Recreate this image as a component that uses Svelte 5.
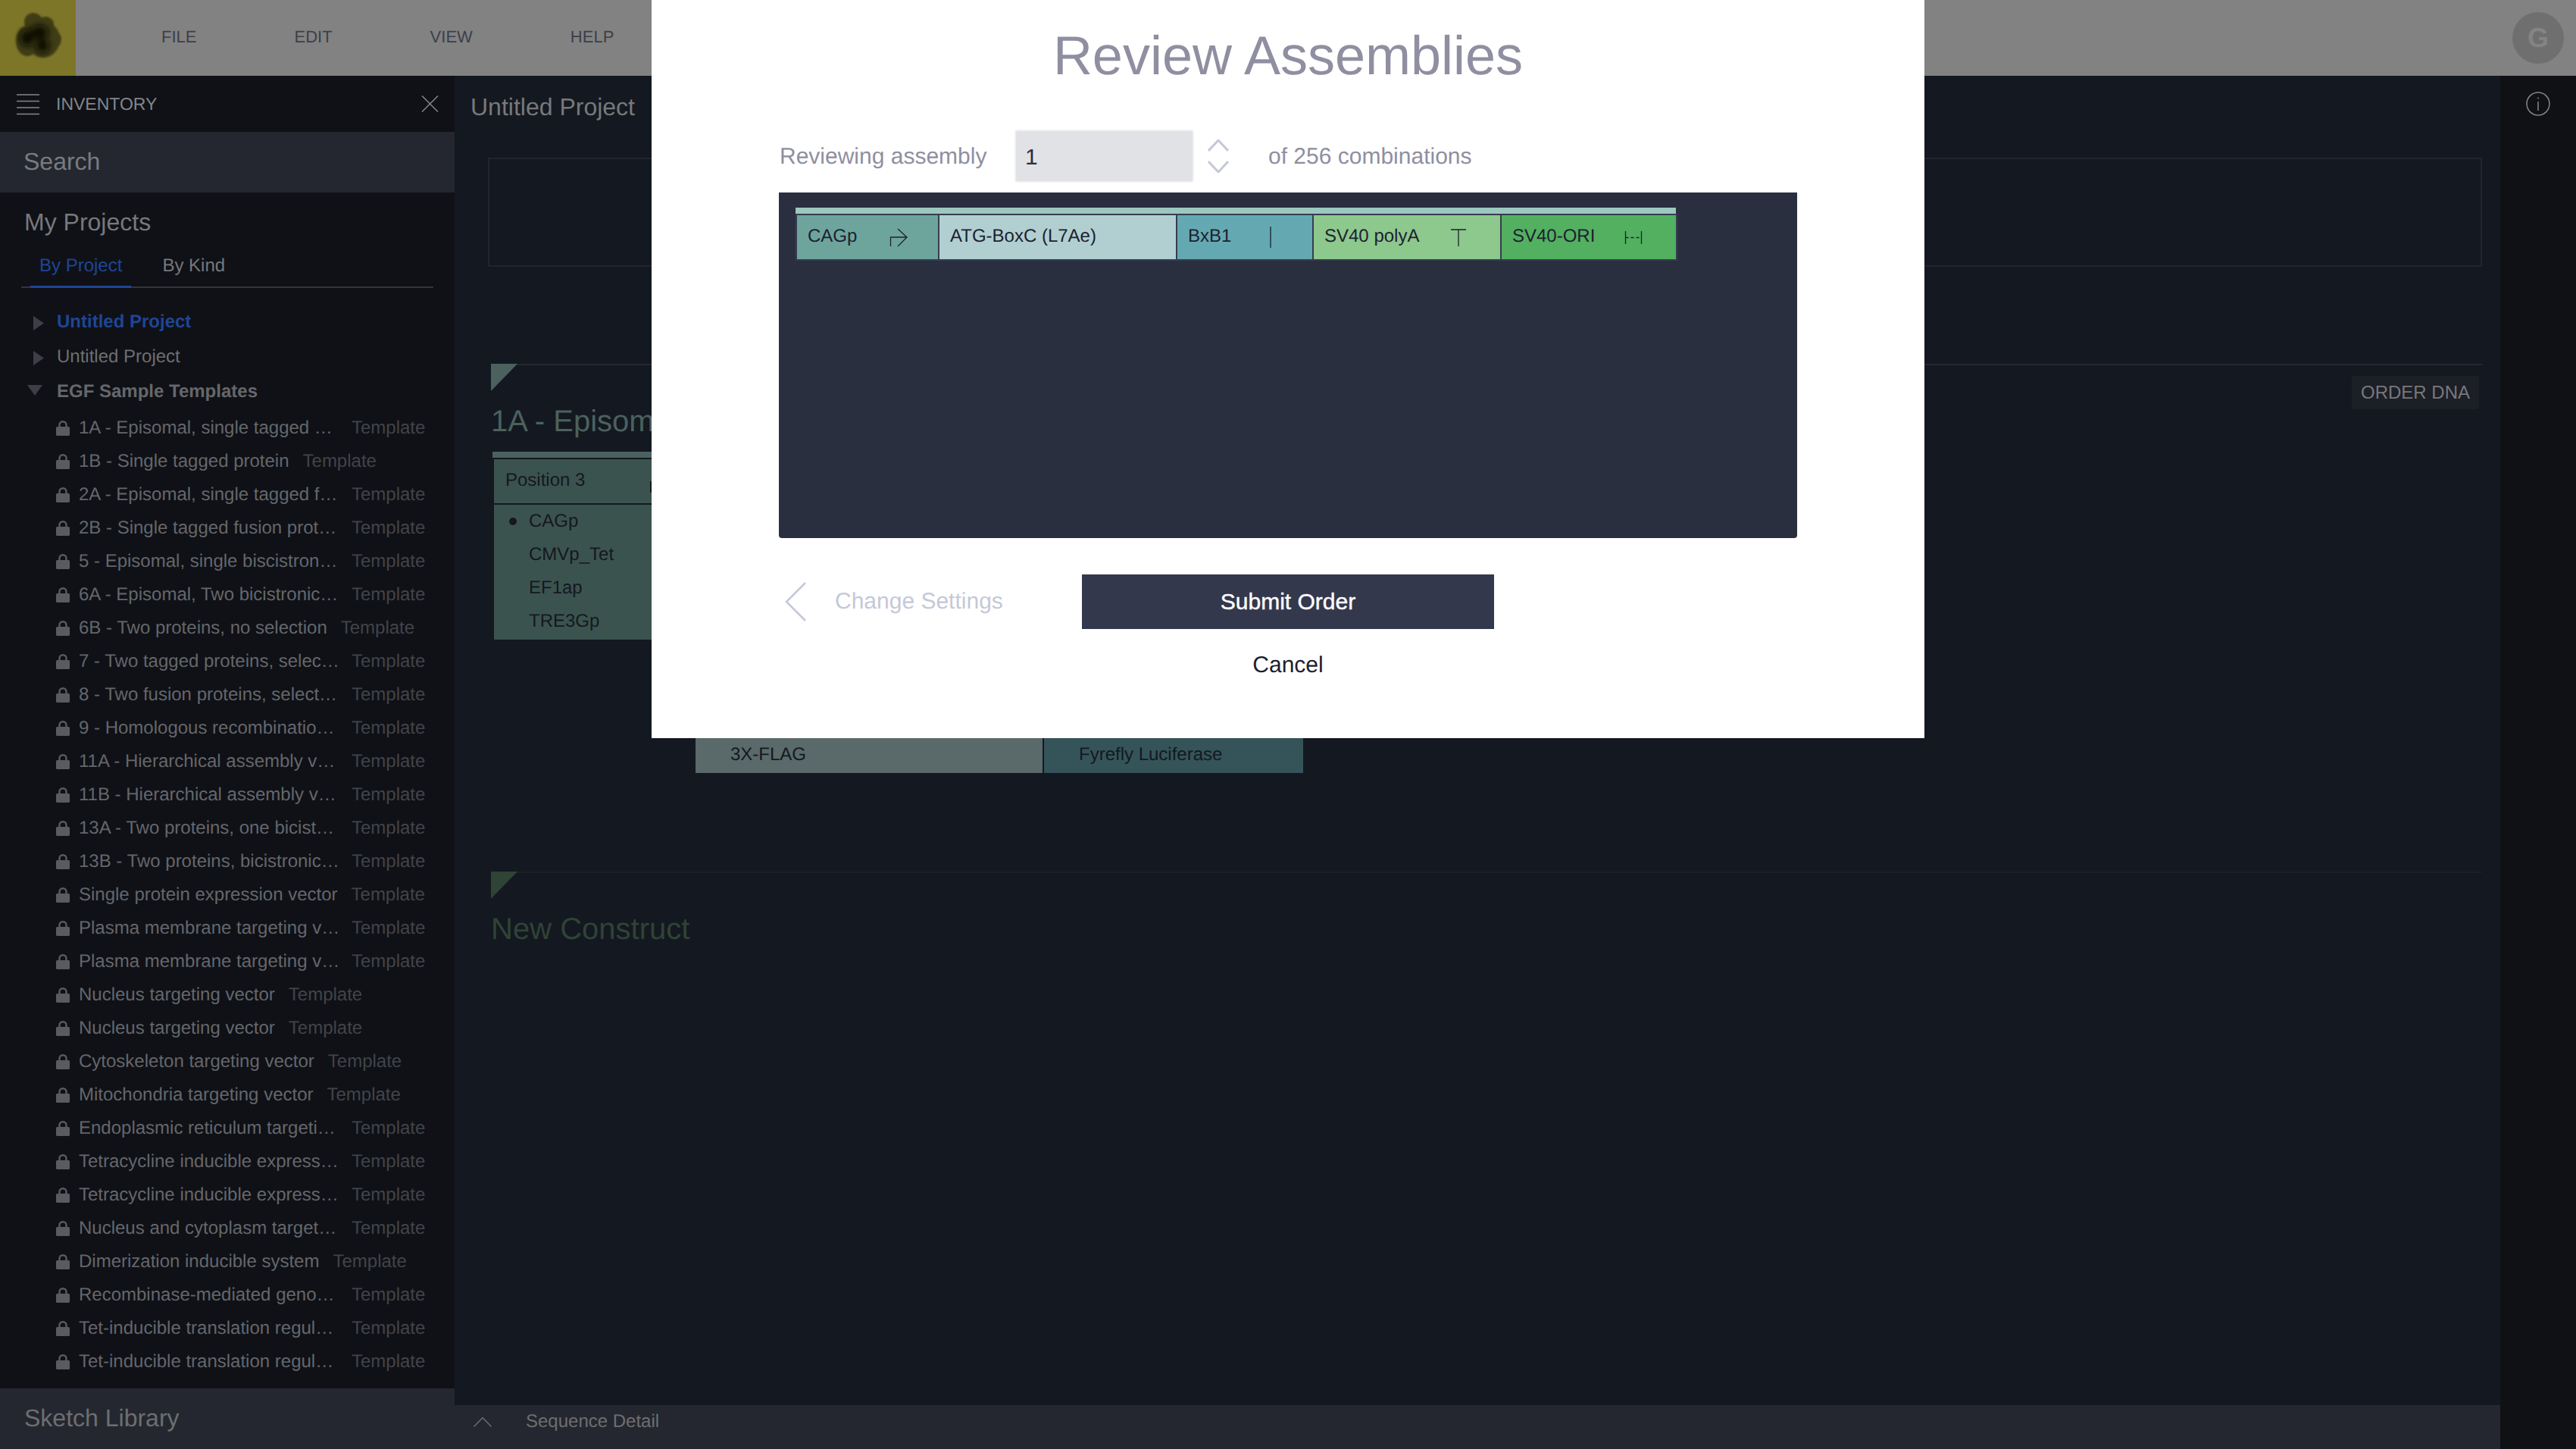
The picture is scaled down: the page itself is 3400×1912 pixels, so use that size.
<script>
  const menu = ['FILE', 'EDIT', 'VIEW', 'HELP'];

  const templates = [
    '1A - Episomal, single tagged …',
    '1B - Single tagged protein',
    '2A - Episomal, single tagged f…',
    '2B - Single tagged fusion prot…',
    '5 - Episomal, single biscistron…',
    '6A - Episomal, Two bicistronic…',
    '6B - Two proteins, no selection',
    '7 - Two tagged proteins, selec…',
    '8 - Two fusion proteins, select…',
    '9 - Homologous recombinatio…',
    '11A - Hierarchical assembly v…',
    '11B - Hierarchical assembly v…',
    '13A - Two proteins, one bicist…',
    '13B - Two proteins, bicistronic…',
    'Single protein expression vector',
    'Plasma membrane targeting v…',
    'Plasma membrane targeting v…',
    'Nucleus targeting vector',
    'Nucleus targeting vector',
    'Cytoskeleton targeting vector',
    'Mitochondria targeting vector',
    'Endoplasmic reticulum targeti…',
    'Tetracycline inducible express…',
    'Tetracycline inducible express…',
    'Nucleus and cytoplasm target…',
    'Dimerization inducible system',
    'Recombinase-mediated geno…',
    'Tet-inducible translation regul…',
    'Tet-inducible translation regul…'
  ];

  const parts = [
    { name: 'CAGp', w: 186, tone: 'cag', icon: 'promoter', at: 120 },
    { name: 'ATG-BoxC (L7Ae)', w: 312, tone: 'atg' },
    { name: 'BxB1', w: 178, tone: 'bxb', icon: 'insulator', at: 109 },
    { name: 'SV40 polyA', w: 246, tone: 'poly', icon: 'terminator', at: 177 },
    { name: 'SV40-ORI', w: 230, tone: 'ori', icon: 'origin', at: 160 }
  ];

  const options = ['CAGp', 'CMVp_Tet', 'EF1ap', 'TRE3Gp'];
</script>

<div class="app">
  <header class="topbar">
    <div class="logo">
      <svg width="100" height="100" viewBox="0 0 100 100">
        <defs>
          <filter id="soft" x="-20%" y="-20%" width="140%" height="140%"><feGaussianBlur stdDeviation="1.2" /></filter>
          <filter id="softer" x="-40%" y="-40%" width="180%" height="180%"><feGaussianBlur stdDeviation="4" /></filter>
        </defs>
        <g filter="url(#soft)" fill="#3f3d13">
          <ellipse cx="44" cy="29" rx="12" ry="12" />
          <ellipse cx="60" cy="32" rx="11" ry="10" />
          <ellipse cx="36" cy="54" rx="15" ry="20" />
          <ellipse cx="57" cy="52" rx="22" ry="24" />
          <ellipse cx="72" cy="52" rx="9" ry="11" />
        </g>
        <g filter="url(#softer)" fill="#0c0c03">
          <ellipse cx="36" cy="50" rx="10" ry="11" />
          <ellipse cx="56" cy="60" rx="9" ry="10" />
          <ellipse cx="52" cy="42" rx="12" ry="9" />
        </g>
      </svg>
    </div>
    <nav class="menu">
      {#each menu as item}
        <span>{item}</span>
      {/each}
    </nav>
    <div class="avatar">G</div>
  </header>

  <div class="body">
    <aside class="sidebar">
      <div class="inv-head">
        <svg class="burger" width="30" height="28" viewBox="0 0 30 28">
          <path d="M0 1H30M0 9.500H30M0 18H30M0 26.500H30" />
        </svg>
        <span>INVENTORY</span>
        <svg class="close" width="23" height="22" viewBox="0 0 23 22">
          <path d="M1 0.500L22 21.500M22 0.500L1 21.500" />
        </svg>
      </div>
      <div class="search">Search</div>
      <h3 class="my-projects">My Projects</h3>
      <div class="tabs">
        <span class="tab active">By Project</span>
        <span class="tab">By Kind</span>
      </div>
      <div class="tree">
        <div class="node selected">
          <svg width="39" height="46" viewBox="0 0 39 46"><polygon points="8,15 22,24.500 8,34" /></svg>
          Untitled Project
        </div>
        <div class="node">
          <svg width="39" height="46" viewBox="0 0 39 46"><polygon points="8,15 22,24.500 8,34" /></svg>
          Untitled Project
        </div>
        <div class="node open">
          <svg width="39" height="46" viewBox="0 0 39 46"><polygon points="0,14 20,14 10,28" /></svg>
          EGF Sample Templates
        </div>
        <ul class="templates">
          {#each templates as name}
            <li>
              <svg width="18" height="20" viewBox="0 0 18 20">
                <path class="shackle" d="M4.500 9V5.500C4.500 3 6.500 1.200 9 1.200S13.500 3 13.500 5.500V9" />
                <rect y="8" width="18" height="12" rx="1.500" />
              </svg>
              <span class="tpl-name" class:cut={name.endsWith('…')}>{name}</span>
              <span class="tpl-kind">Template</span>
            </li>
          {/each}
        </ul>
      </div>
      <div class="sketch">Sketch Library</div>
    </aside>

    <main class="center">
      <div class="canvas">
        <h2 class="project">Untitled Project</h2>
        <div class="box"></div>

        <section class="construct">
          <span class="corner teal"></span>
          <div class="construct-head">
            <h2 class="teal-text">1A - Episomal, single tagged protein</h2>
            <button class="order">ORDER DNA</button>
          </div>
          <div class="bar"></div>
          <div class="position">
            <div class="pos-head">Position 3<i></i></div>
            <ul>
              {#each options as opt, i}
                <li class:picked={i === 0}>{opt}</li>
              {/each}
            </ul>
          </div>
          <div class="lower">
            <div class="flag"><span>3X-FLAG</span></div>
            <div class="luc"><span>Fyrefly Luciferase</span></div>
          </div>
        </section>

        <section class="construct empty">
          <span class="corner green"></span>
          <div class="construct-head">
            <h2 class="green-text">New Construct</h2>
          </div>
        </section>
      </div>
      <div class="detail">
        <svg width="24" height="13" viewBox="0 0 24 13"><path d="M0.500 12.500L12 0.800L23.500 12.500" /></svg>
        <span>Sequence Detail</span>
      </div>
    </main>

    <aside class="rail">
      <svg width="32" height="32" viewBox="0 0 32 32">
        <circle cx="16" cy="16" r="15" />
        <path d="M16 7.500V9.500M16 13V25" />
      </svg>
    </aside>
  </div>

  <div class="modal">
    <h1>Review Assemblies</h1>
    <div class="picker">
      <label for="assembly">Reviewing assembly</label>
      <input id="assembly" type="text" value="1" />
      <svg class="stepper" width="28" height="44" viewBox="0 0 28 44">
        <path d="M1 15L14 1L27 15M1 29L14 43L27 29" />
      </svg>
      <span>of 256 combinations</span>
    </div>
    <div class="panel">
      <div class="panel-bar"></div>
      <div class="parts">
        {#each parts as part}
          <div class="part {part.tone}" style="width: {part.w}px">
            {part.name}
            {#if part.icon}
              <svg style="left: {part.at}px" width="28" height="32" viewBox="0 0 28 32">
                {#if part.icon === 'promoter'}
                  <path d="M3.500 27V15H25M13 4L25 15L13 27" />
                {:else if part.icon === 'insulator'}
                  <path d="M14 1V29" />
                {:else if part.icon === 'terminator'}
                  <path d="M14 27V5M4 5H24" />
                {:else}
                  <path d="M3.500 7V24M24.500 7V24" />
                  <path stroke-dasharray="4 3" d="M3.500 15.500H24.500" />
                {/if}
              </svg>
            {/if}
          </div>
        {/each}
      </div>
    </div>
    <div class="actions">
      <svg width="30" height="52" viewBox="0 0 30 52"><path d="M28 1L3 26L28 51" /></svg>
      <span class="back">Change Settings</span>
      <button class="submit">Submit Order</button>
    </div>
    <div class="cancel">Cancel</div>
  </div>
</div>

<style>
  :global(body) {
    margin: 0;
    background: #141820;
  }
  h1, h2, h3, ul {
    margin: 0;
    padding: 0;
    font-weight: normal;
    list-style: none;
  }
  .app {
    position: relative;
    display: flex;
    flex-direction: column;
    width: 3400px;
    height: 1912px;
    overflow: hidden;
    font-family: "Liberation Sans", Arial, sans-serif;
    font-size: 24px;
    text-rendering: geometricPrecision;
  }

  .topbar {
    display: flex;
    align-items: center;
    height: 100px;
    flex: none;
    background: #828282;
  }
  .logo {
    width: 100px;
    height: 100px;
    background: #7d7527;
  }
  .logo svg {
    display: block;
  }
  .menu {
    display: flex;
    gap: 129px;
    margin: -2px 0 0 113px;
    font-size: 22px;
    color: #3d3f48;
  }
  .avatar {
    width: 68px;
    height: 68px;
    margin-left: auto;
    margin-right: 16px;
    border-radius: 50%;
    background: #6f6f6f;
    color: #848484;
    font-size: 36px;
    font-weight: bold;
    line-height: 68px;
    text-align: center;
  }

  .body {
    display: flex;
    flex: 1;
    min-height: 0;
  }

  .sidebar {
    display: flex;
    flex-direction: column;
    width: 600px;
    flex: none;
    background: #0f1116;
    color: #77787c;
  }
  .inv-head {
    display: flex;
    align-items: center;
    height: 74px;
    padding-left: 22px;
    color: #85868a;
    font-size: 23px;
  }
  .inv-head span {
    margin-left: 22px;
  }
  .inv-head svg {
    fill: none;
    stroke: #85868a;
    stroke-width: 1.500;
  }
  .burger {
    margin-top: 2px;
  }
  .close {
    margin-left: auto;
    margin-right: 21px;
  }
  .search {
    height: 80px;
    padding-left: 31px;
    background: #24272f;
    color: #7a7b80;
    font-size: 32px;
    line-height: 78px;
  }
  .my-projects {
    padding: 20px 0 0 32px;
    font-size: 32px;
    line-height: 38px;
  }
  .tabs {
    display: flex;
    margin: 0 28px;
    padding-left: 12px;
    border-bottom: 2px solid #33353b;
  }
  .tab {
    padding: 23px 12px 11px;
    line-height: 32px;
  }
  .tab + .tab {
    margin-left: 29px;
  }
  .tab.active {
    color: #1f4596;
    box-shadow: inset 0 -3px 0 #1f4596;
    margin-bottom: -2px;
    padding-bottom: 13px;
  }
  .tree {
    flex: 1;
    padding-top: 22px;
  }
  .node {
    display: flex;
    align-items: center;
    height: 46px;
    padding-left: 36px;
    color: #6d6e72;
  }
  .node svg {
    fill: #3c3f46;
  }
  .node.selected {
    color: #1f4596;
    font-weight: bold;
  }
  .node.open {
    color: #66676b;
    font-weight: bold;
  }
  .templates {
    margin-top: 3px;
  }
  .templates li {
    display: flex;
    align-items: center;
    height: 44px;
    padding-left: 74px;
    color: #65666b;
    white-space: nowrap;
  }
  .templates svg {
    flex: none;
    margin-right: 12px;
    fill: #5a5b60;
  }
  .shackle {
    fill: none;
    stroke: #5a5b60;
    stroke-width: 2.400;
  }
  .tpl-name.cut {
    width: 342px;
    flex: none;
  }
  .tpl-kind {
    margin-left: 18px;
    color: #424349;
  }
  .sketch {
    height: 80px;
    padding-left: 32px;
    background: #24272f;
    color: #6d6e72;
    font-size: 32px;
    line-height: 78px;
  }

  .center {
    display: flex;
    flex-direction: column;
    flex: 1;
    min-width: 0;
  }
  .canvas {
    flex: 1;
    min-height: 0;
    overflow: hidden;
  }
  .project {
    height: 108px;
    padding: 21px 0 0 21px;
    box-sizing: border-box;
    color: #77787c;
    font-size: 32px;
    line-height: 40px;
  }
  .box {
    height: 144px;
    box-sizing: border-box;
    margin: 0 24px 0 44px;
    border: 2px solid #22252e;
  }
  .construct {
    position: relative;
    margin: 128px 24px 0 48px;
    border-top: 2px solid #262930;
  }
  .construct.empty {
    margin-top: 130px;
    border-top-color: #1c1f26;
  }
  .corner {
    position: absolute;
    top: -2px;
    left: 0;
    width: 35px;
    height: 36px;
    clip-path: polygon(0 0, 100% 0, 0 100%);
  }
  .corner.teal {
    background: #4b615e;
  }
  .corner.green {
    background: #2f4336;
  }
  .construct-head {
    display: flex;
    justify-content: space-between;
    align-items: flex-start;
    height: 114px;
  }
  .construct-head h2 {
    margin-top: 50px;
    font-size: 40px;
    line-height: 48px;
    white-space: nowrap;
  }
  .teal-text {
    color: #4b615e;
  }
  .green-text {
    color: #2f4336;
  }
  .order {
    width: 168px;
    height: 44px;
    margin: 14px 4px 0 0;
    padding: 0;
    border: 0;
    border-radius: 3px;
    background: #1c1f26;
    color: #77787c;
    font: 24px "Liberation Sans", Arial, sans-serif;
  }
  .bar {
    width: 1400px;
    height: 8px;
    margin-left: 2px;
    background: #4b615e;
  }
  .position {
    width: 1400px;
    margin: 2px 0 0 4px;
    background: #3b534f;
    color: #14181f;
  }
  .pos-head {
    position: relative;
    height: 60px;
    padding-left: 15px;
    box-sizing: border-box;
    border-bottom: 2px solid #14181f;
    line-height: 55px;
  }
  .pos-head i {
    position: absolute;
    left: 206px;
    top: 29px;
    width: 2px;
    height: 15px;
    background: #14181f;
  }
  .position ul {
    padding: 0;
    height: 178px;
  }
  .position li {
    position: relative;
    height: 44px;
    padding-left: 46px;
    line-height: 44px;
  }
  .picked::before {
    content: "";
    position: absolute;
    left: 20px;
    top: 17px;
    width: 10px;
    height: 10px;
    border-radius: 50%;
    background: #14181f;
  }
  .lower {
    display: flex;
    gap: 2px;
    height: 120px;
    margin: 56px 0 0 270px;
    color: #14181f;
    line-height: 49px;
  }
  .lower div {
    display: flex;
    align-items: flex-end;
  }
  .flag {
    width: 458px;
    padding-left: 46px;
    box-sizing: border-box;
    background: #5a6969;
  }
  .luc {
    width: 342px;
    padding-left: 46px;
    box-sizing: border-box;
    background: #345459;
  }

  .detail {
    display: flex;
    align-items: center;
    height: 58px;
    flex: none;
    box-sizing: border-box;
    padding: 0 0 14px 25px;
    background: #24272f;
    color: #6d6e72;
  }
  .detail svg {
    margin-right: 45px;
    fill: none;
    stroke: #6d6e72;
    stroke-width: 1.500;
  }

  .rail {
    width: 100px;
    flex: none;
    background: #101114;
    text-align: center;
  }
  .rail svg {
    margin-top: 21px;
    fill: none;
    stroke: #84858a;
    stroke-width: 1.500;
  }

  .modal {
    position: absolute;
    top: 0;
    left: 860px;
    width: 1680px;
    height: 974px;
    background: #fff;
  }
  .modal h1 {
    color: #8f8fa1;
    font-size: 72px;
    line-height: 148px;
    text-align: center;
  }
  .picker {
    display: flex;
    align-items: center;
    height: 70px;
    margin: 23px 0 0 169px;
    color: #8f8fa1;
    font-size: 30px;
  }
  .picker label {
    flex: none;
    width: 272px;
    padding-top: 1px;
    white-space: nowrap;
  }
  .picker span {
    padding-top: 1px;
  }
  .picker input {
    width: 237px;
    height: 70px;
    margin-left: 38px;
    padding: 2px 0 0 12px;
    box-sizing: border-box;
    border: 2px solid #f2f2f4;
    border-radius: 4px;
    outline: 0;
    background: #e0e2e6;
    color: #2a2f40;
    font: 30px "Liberation Sans", Arial, sans-serif;
  }
  .stepper {
    margin: 0 52px 0 18px;
    fill: none;
    stroke: #c5c9d6;
    stroke-width: 3;
  }
  .panel {
    width: 1344px;
    height: 456px;
    box-sizing: border-box;
    margin: 13px 0 0 168px;
    padding: 20px 0 0 22px;
    border-radius: 0 0 4px 4px;
    background: #2a2f40;
  }
  .panel-bar {
    width: 1162px;
    height: 8px;
    background: #9cc8bf;
  }
  .parts {
    display: flex;
    gap: 2px;
    width: 1164px;
    padding: 2px;
    box-sizing: border-box;
    background: #373c4f;
  }
  .part {
    position: relative;
    height: 58px;
    padding-left: 14px;
    box-sizing: border-box;
    color: #1d2130;
    line-height: 56px;
  }
  .part svg {
    position: absolute;
    top: 14px;
    fill: none;
    stroke: #1d2130;
    stroke-width: 1.300;
  }
  .cag { background: #6da59d; }
  .atg { background: #b1cfd1; }
  .bxb { background: #64a9b1; }
  .poly { background: #8dc88d; }
  .ori { background: #52b060; }

  .actions {
    display: flex;
    align-items: center;
    height: 72px;
    margin: 48px 0 0 175px;
  }
  .actions svg {
    fill: none;
    stroke: #c5c8d8;
    stroke-width: 2.500;
  }
  .back {
    flex: none;
    width: 221px;
    margin-left: 37px;
    color: #c5c8d8;
    font-size: 30px;
    white-space: nowrap;
  }
  .submit {
    width: 544px;
    height: 72px;
    margin-left: 105px;
    padding: 0;
    border: 0;
    background: #33384d;
    color: #fff;
    font: 30px "Liberation Sans", Arial, sans-serif;
    -webkit-text-stroke: 0.400px #fff;
  }
  .cancel {
    margin-top: 28px;
    color: #1d2030;
    font-size: 30px;
    line-height: 40px;
    text-align: center;
  }
</style>
